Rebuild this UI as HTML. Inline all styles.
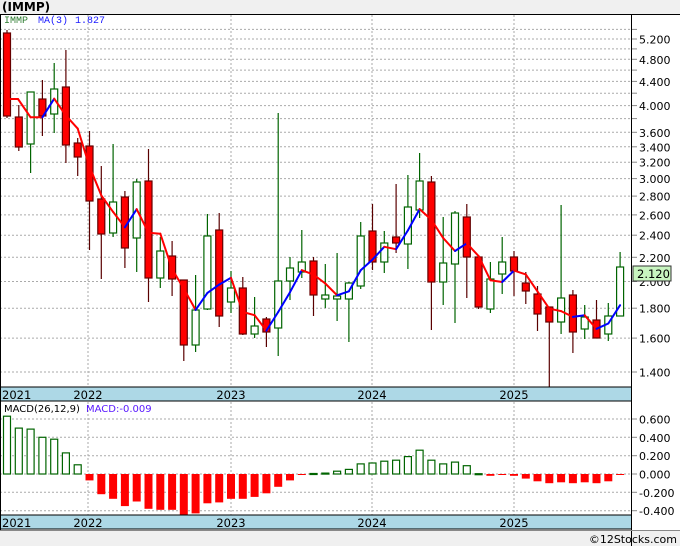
<!DOCTYPE html>
<html><head><meta charset="utf-8"><style>
html,body{margin:0;padding:0;background:#fff;}
body{width:680px;height:546px;overflow:hidden;font-family:"Liberation Sans","DejaVu Sans",sans-serif;}
svg{display:block}
</style></head><body>
<svg id="c" width="680" height="546" xmlns="http://www.w3.org/2000/svg" font-family="'DejaVu Sans','Liberation Sans',sans-serif">
<rect x="0" y="0" width="680" height="14" fill="#f0f0f0"/>
<text x="2" y="11" font-size="12" font-weight="bold" fill="#000">(IMMP)</text>
<rect x="0" y="530" width="680" height="16" fill="#f0f0f0"/>
<text x="677" y="543" font-size="11" text-anchor="end" fill="#000">©12Stocks.com</text>
<g id="g"></g>
</svg>
<script>
var g=document.getElementById('g');var s='';
function y(p){return 372-253.8*(Math.log(p)-Math.log(1.4));}
function yp(v){return 474-91.7*v;}
for(var p=1.4;p<=5.41;p+=0.2){var yy=y(p).toFixed(1);s+='<line x1="0" x2="631" y1="'+yy+'" y2="'+yy+'" stroke="#aaa" stroke-dasharray="2,2"/>';s+='<line x1="631" x2="637" y1="'+yy+'" y2="'+yy+'" stroke="#888"/>';}
var labs=[5.2,4.8,4.4,4.0,3.6,3.4,3.2,3.0,2.8,2.6,2.4,2.2,2.0,1.8,1.6,1.4];
labs.forEach(function(p){s+='<text x="639" y="'+(y(p)+4.5).toFixed(1)+'" font-size="11" fill="#000">'+p.toFixed(3)+'</text>';});
var yrs=[88,231,372,514];
yrs.forEach(function(x){s+='<line x1="'+x+'" x2="'+x+'" y1="15" y2="387" stroke="#aaa" stroke-dasharray="2,2"/><line x1="'+x+'" x2="'+x+'" y1="402" y2="515" stroke="#aaa" stroke-dasharray="2,2"/>';});
[0.6,0.4,0.2,0,-0.2,-0.4].forEach(function(v){var yy=yp(v).toFixed(1);s+='<line x1="0" x2="631" y1="'+yy+'" y2="'+yy+'" stroke="#aaa" stroke-dasharray="2,2"/><line x1="631" x2="637" y1="'+yy+'" y2="'+yy+'" stroke="#888"/><text x="639" y="'+(yp(v)+4.5).toFixed(1)+'" font-size="11" fill="#000">'+(v<0?'-':' ')+Math.abs(v).toFixed(3)+'</text>';});
var C=[[33,116,30,118,0],[117,147,105,151,0],[92,144,92,173,1],[99,116,80,136,0],[89,114,63,133,1],[87,145,50,163,0],[143,157,138,176,0],[146,201,131,250,0],[199,234,166,279,0],[202,233,144,237,1],[197,248,191,268,0],[182,238,179,272,1],[181,278,149,302,0],[251,278,237,288,1],[256,279,241,296,0],[280,345,280,361,0],[310,345,275,352,1],[236,309,214,310,1],[230,316,213,327,0],[288,302,271,313,1],[288,334,277,335,0],[326,334,297,338,1],[319,332,317,347,0],[281,328,113,356,1],[268,281,257,300,1],[262,272,230,278,1],[261,295,257,316,0],[295,299,264,308,1],[296,299,253,321,1],[283,299,282,342,1],[236,286,222,289,1],[231,262,204,270,0],[243,262,231,273,1],[237,243,184,253,0],[207,244,175,269,1],[181,210,153,218,1],[182,282,176,330,0],[263,282,217,305,1],[213,264,211,323,1],[217,257,204,298,0],[257,307,257,309,0],[279,309,262,313,1],[262,274,237,294,1],[257,271,251,296,0],[283,291,272,304,0],[294,314,286,331,0],[307,322,307,387,0],[298,322,205,334,1],[295,332,290,353,0],[317,329,305,339,1],[320,338,300,338,0],[316,334,303,341,1],[267,316,252,316,1]];
var M=[.63,.50,.49,.40,.38,.23,.10,-.07,-.22,-.27,-.35,-.30,-.38,-.39,-.39,-.45,-.43,-.32,-.31,-.27,-.27,-.25,-.21,-.14,-.07,-.005,.005,.01,.03,.05,.11,.12,.14,.15,.19,.26,.15,.11,.13,.09,.003,-.02,-.01,-.02,-.05,-.08,-.10,-.09,-.10,-.09,-.10,-.08,-.005];
function X(i){return 7+i*11.79;}
C.forEach(function(c,i){var x=X(i);
 s+='<line x1="'+x.toFixed(1)+'" x2="'+x.toFixed(1)+'" y1="'+c[2]+'" y2="'+c[3]+'" stroke="'+(c[4]?'#006400':'#5a0000')+'" stroke-width="1.2"/>';
 s+='<rect x="'+(x-3.5).toFixed(1)+'" y="'+c[0]+'" width="7" height="'+Math.max(c[1]-c[0],1)+'" fill="'+(c[4]?'#fff':'#f00')+'" stroke="'+(c[4]?'#006400':'#600')+'" stroke-width="1.2"/>';
});
var cl=C.map(function(c){return 1.4*Math.exp((372-(c[4]?c[0]:c[1]))/253.8);});
var pts=[];for(var i=0;i<C.length;i++){var a=cl.slice(Math.max(0,i-2),i+1);var m=a.reduce(function(u,v){return u+v;},0)/a.length;pts.push([X(i),y(m)]);}
pts[0]=[10,99];pts[1]=[18,99];
for(var i=1;i<pts.length;i++){var up=pts[i][1]<pts[i-1][1];s+='<line x1="'+pts[i-1][0].toFixed(1)+'" y1="'+pts[i-1][1].toFixed(1)+'" x2="'+pts[i][0].toFixed(1)+'" y2="'+pts[i][1].toFixed(1)+'" stroke="'+(up?'#00f':'#f00')+'" stroke-width="2" stroke-linecap="round"/>';}
M.forEach(function(v,i){var x=X(i);var y0=474,y1=yp(v);var t=Math.min(y0,y1),h=Math.max(Math.abs(y1-y0),1);
 if(v>=0)s+='<rect x="'+(x-3.5).toFixed(1)+'" y="'+t.toFixed(1)+'" width="7" height="'+h.toFixed(1)+'" fill="#fff" stroke="#006400" stroke-width="1.2"/>';
 else s+='<rect x="'+(x-4).toFixed(1)+'" y="'+t.toFixed(1)+'" width="8" height="'+h.toFixed(1)+'" fill="#f00"/>';});
function band(y0){var r='<rect x="0" y="'+y0+'" width="631" height="14" fill="#add8e6"/><line x1="0" x2="631" y1="'+y0+'" y2="'+y0+'" stroke="#000"/><line x1="0" x2="631" y1="'+(y0+14)+'" y2="'+(y0+14)+'" stroke="#000"/>';
 r+='<text x="2" y="'+(y0+12)+'" font-size="11.5" fill="#000">2021</text>';
 ['2022','2023','2024','2025'].forEach(function(t,k){r+='<text x="'+yrs[k]+'" y="'+(y0+12)+'" font-size="11.5" text-anchor="middle" fill="#000">'+t+'</text>';});return r;}
s+=band(387)+band(515);
s+='<line x1="0" x2="680" y1="14.5" y2="14.5" stroke="#000"/><line x1="0.5" x2="0.5" y1="14" y2="530" stroke="#000"/><line x1="631.5" x2="631.5" y1="14" y2="546" stroke="#000"/><line x1="0" x2="680" y1="530.5" y2="530.5" stroke="#888"/>';
s+='<text x="4" y="23" font-size="10" fill="#2e7d32" font-family="Liberation Mono,monospace">IMMP</text><text x="38" y="23" font-size="10" fill="#1a1aff" font-family="Liberation Mono,monospace">MA(3)</text><text x="75" y="23" font-size="10" fill="#1a1aff" font-family="Liberation Mono,monospace">1.827</text>';
s+='<text x="4" y="412" font-size="10" fill="#000">MACD(26,12,9)</text><text x="86" y="412" font-size="10" fill="#5a1aff">MACD:-0.009</text>';
s+='<rect x="633" y="266" width="38" height="15" fill="#c8f5c0" stroke="#333"/><text x="637" y="278" font-size="11.5" fill="#000">2.120</text>';
g.innerHTML=s;
</script>
</body></html>
